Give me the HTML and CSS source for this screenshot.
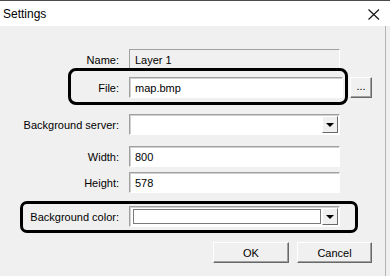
FILE: index.html
```html
<!DOCTYPE html>
<html lang="en">
  <head>
    <meta charset="UTF-8" />
    <meta name="viewport" content="width=device-width, initial-scale=1.0" />
    <title>Settings</title>
    <link rel="stylesheet" href="styles.css">
  </head>
  <body>
    <div class="dialog">
      <div class="titlebar">
        <span class="title">Settings</span>
        <svg class="close" width="12" height="11" viewBox="0 0 12 11">
          <path d="M0.5 0.5 L11 10.5 M11 0.5 L0.5 10.5" stroke="#111" stroke-width="1.1" fill="none" />
        </svg>
      </div>

      <div class="content">
        <div class="row row-name">
          <span class="label">Name:</span>
          <div class="field field-static">Layer 1</div>
        </div>

        <div class="row row-file mark">
          <span class="label">File:</span>
          <div class="field field-file">map.bmp</div>
          <button class="btn btn-browse">...</button>
        </div>

        <div class="row row-server">
          <span class="label">Background server:</span>
          <div class="field combo">
            <span class="combo-value"></span>
            <span class="drop"><i class="arrow"></i></span>
          </div>
        </div>

        <div class="row row-width">
          <span class="label">Width:</span>
          <div class="field">800</div>
        </div>

        <div class="row row-height">
          <span class="label">Height:</span>
          <div class="field">578</div>
        </div>

        <div class="row row-color mark mark-wide">
          <span class="label">Background color:</span>
          <div class="field combo combo-color">
            <span class="swatch"></span>
            <span class="drop"><i class="arrow"></i></span>
          </div>
        </div>

        <div class="actions">
          <button class="btn btn-ok">OK</button>
          <button class="btn btn-cancel">Cancel</button>
        </div>
      </div>
    </div>
  </body>
</html>
```

FILE: styles.css
```css
:root {
  --face: #f0f0f0; /* colore finestra */
  --shadow: #a0a0a0;
  --dark: #696969;
  --light: #fff;
}

body {
  margin: 0;
  padding: 0;
  background-color: var(--face);
  font-family: "Liberation Sans", Arial, sans-serif;
  font-size: 11px;
  color: #000;
}

.dialog {
  width: 390px;
  height: 276px;
  border-top: 1px solid #4a4a4a;
  box-sizing: border-box;
  overflow: hidden;
}

.titlebar {
  height: 25px;
  background-color: #fff;
  display: flex;
  justify-content: space-between;
  align-items: center;
  padding: 0 10px 0 3px;
}

.title {
  font-size: 12px;
}

.close {
  display: block;
  margin-top: 1px;
}

.content {
  width: 386px;
  height: 250px;
  box-sizing: border-box;
  border-right: 1px solid #b4b4b4;
  display: flex;
  flex-direction: column;
}

.row {
  position: relative;
  display: flex;
  align-items: center;
  height: 21px;
}

.label {
  width: 119px;
  margin-right: 10px;
  text-align: right;
}

.field {
  width: 211px;
  height: 21px;
  box-sizing: border-box;
  background-color: #fff;
  border: 1px solid;
  border-color: var(--shadow) var(--light) var(--light) var(--shadow);
  box-shadow: inset 1px 1px 0 #d0d0d0;
  padding: 0 5px;
  display: flex;
  align-items: center;
}

.field-static {
  background-color: var(--face);
  box-shadow: none;
}

.field-file {
  width: 214px;
}

.row-name { margin-top: 23px; }
.row-file { margin-top: 7px; }
.row-server { margin-top: 16px; }
.row-width { margin-top: 11px; }
.row-height { margin-top: 5px; }
.row-color { margin-top: 13px; }

/* evidenziazione nera sopra le righe */
.mark::before {
  content: "";
  position: absolute;
  left: 68px;
  top: -9px;
  width: 280px;
  height: 37px;
  box-sizing: border-box;
  border: 3px solid #000;
  border-radius: 8px;
  pointer-events: none;
}

.mark-wide::before {
  left: 20px;
  top: -5px;
  width: 338px;
  height: 32px;
  border-radius: 7px;
}

.combo {
  padding: 0 1px 0 3px;
  justify-content: space-between;
}

.drop {
  width: 16px;
  height: 17px;
  box-sizing: border-box;
  background-color: var(--face);
  border: 1px solid;
  border-color: var(--light) var(--dark) var(--dark) var(--light);
  display: flex;
  justify-content: center;
  align-items: center;
}

.arrow {
  width: 0;
  height: 0;
  border-left: 4px solid transparent;
  border-right: 4px solid transparent;
  border-top: 4px solid #000;
  margin-top: 1px;
}

.swatch {
  width: 188px;
  height: 15px;
  box-sizing: border-box;
  background-color: #fff;
  border: 1px solid #7a7a7a;
}

.btn {
  font-family: inherit;
  font-size: 11px;
  color: #000;
  height: 21px;
  padding: 0;
  background-color: var(--face);
  border: 1px solid;
  border-color: var(--light) var(--dark) var(--dark) var(--light);
  box-shadow: inset -1px -1px 0 var(--shadow);
  box-sizing: border-box;
}

.btn-browse {
  width: 22px;
  margin-left: 7px;
  line-height: 1;
  padding-bottom: 2px;
}

.actions {
  display: flex;
  justify-content: flex-end;
  gap: 8px;
  margin-top: 15px;
  padding-right: 13px;
}

.btn-ok {
  width: 76px;
}

.btn-cancel {
  width: 75px;
}
```
